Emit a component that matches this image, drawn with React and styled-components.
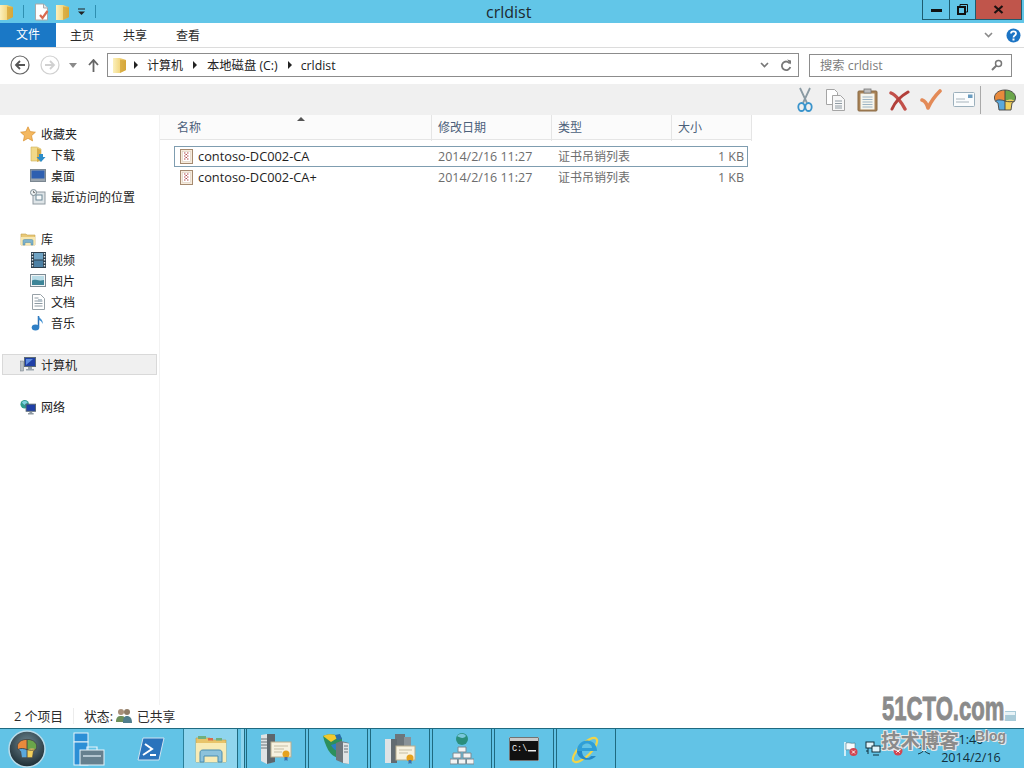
import React from "react";
import styled, { createGlobalStyle } from "styled-components";

const GlobalStyle = createGlobalStyle`
  html, body {
    margin: 0;
    padding: 0;
    background: #fff;
  }
  body {
    font-family: "Open Sans", "Noto Sans CJK SC", sans-serif;
    font-size: 12px;
    color: #1e1e1e;
  }
`;

const Screen = styled.div`
  position: relative;
  width: 1024px;
  height: 768px;
  display: flex;
  flex-direction: column;
  overflow: hidden;
  background: #fff;
`;

/* title bar */
const TitleBar = styled.div`
  height: 23px;
  flex: none;
  background: #62c6e8;
  display: grid;
  grid-template-columns: 486px auto 1fr;
`;

const QuickAccess = styled.div`
  display: flex;
  align-items: center;
  height: 23px;
`;

const Gap = styled.span`
  width: ${(p) => p.$w}px;
  flex: none;
`;

const QuickSep = styled.span`
  width: 1px;
  height: 13px;
  background: #2f8fb0;
  margin: 0 ${(p) => p.$right || 0}px 0 ${(p) => p.$left || 0}px;
`;

const Title = styled.div`
  font-size: 16px;
  line-height: 24px;
  color: #1d2a30;
`;

const WindowButtons = styled.div`
  display: flex;
  justify-content: flex-end;
  padding-right: 2px;
  height: 20px;
`;

const WindowButton = styled.div`
  width: ${(p) => p.$w}px;
  height: 20px;
  box-sizing: border-box;
  border: 1px solid #1d5c70;
  border-top: none;
  border-left-width: ${(p) => (p.$first ? 1 : 0)}px;
  background: ${(p) => p.$bg || "transparent"};
  display: flex;
  align-items: center;
  justify-content: center;
`;

/* ribbon tabs */
const TabRow = styled.div`
  height: 24px;
  flex: none;
  display: flex;
  align-items: center;
  border-bottom: 1px solid #dcdcdc;
`;

const FileTab = styled.div`
  width: 56px;
  height: 24px;
  background: #1a78c6;
  color: #fff;
  text-align: center;
  line-height: 23px;
  margin-right: 14px;
`;

const Tab = styled.div`
  width: 24px;
  margin-right: 29px;
  white-space: nowrap;
  color: #2a2a2a;
`;

const TabTools = styled.div`
  margin-left: auto;
  display: flex;
  align-items: center;
  gap: 13px;
  padding-right: 3px;
`;

/* address row */
const AddressRow = styled.div`
  height: 36px;
  flex: none;
  display: flex;
  align-items: center;
  padding: 0 12px 2px 10px;
  box-sizing: border-box;
`;

const NavGroup = styled.div`
  width: 97px;
  flex: none;
  display: flex;
  align-items: center;
`;

const AddressBox = styled.div`
  width: 692px;
  height: 24px;
  flex: none;
  box-sizing: border-box;
  border: 1px solid #8c8c8c;
  display: flex;
  align-items: center;
  padding: 0 5px;
`;

const Crumb = styled.span`
  white-space: nowrap;
  color: #222;
  font-size: ${(p) => p.$size || 12}px;
`;

const CrumbArrow = styled.span`
  width: 0;
  height: 0;
  border-left: 4px solid #222;
  border-top: 4px solid transparent;
  border-bottom: 4px solid transparent;
  margin: 0 ${(p) => p.$right || 9}px 0 ${(p) => p.$left || 9}px;
`;

const AddressTools = styled.div`
  margin-left: auto;
  display: flex;
  align-items: center;
  gap: 11px;
  padding-right: 1px;
`;

const SearchBox = styled.div`
  width: 203px;
  height: 23px;
  flex: none;
  margin-left: 10px;
  box-sizing: border-box;
  border: 1px solid #8c8c8c;
  display: flex;
  align-items: center;
  justify-content: space-between;
  padding: 0 8px 0 10px;
  color: #7d7d7d;
  font-size: 12.3px;
`;

/* command bar */
const CommandBar = styled.div`
  height: 31px;
  flex: none;
  background: #f0f0f0;
  display: flex;
  align-items: center;
  justify-content: flex-end;
  padding-right: 7px;
`;

const CommandIcon = styled.div`
  display: flex;
  margin-left: ${(p) => p.$left}px;
`;

const CommandSep = styled.span`
  width: 1px;
  height: 28px;
  background: #a9a9a9;
  margin: 0 12px 0 5px;
`;

/* main area */
const Main = styled.div`
  flex: 1;
  min-height: 0;
  display: flex;
`;

const Sidebar = styled.nav`
  width: 160px;
  flex: none;
  box-sizing: border-box;
  padding-top: 8px;
  border-right: 1px solid #f2f2f2;
`;

const NavGroupBlock = styled.div`
  margin-bottom: 21px;
`;

const NavRow = styled.div`
  height: 21px;
  box-sizing: border-box;
  margin: 0 2px 0 2px;
  display: flex;
  align-items: center;
  gap: 5px;
  padding-left: ${(p) => (p.$child ? 28 : 18)}px;
  color: #222;
  ${(p) => p.$selected && "background: #f0f0f0; border: 1px solid #d9d9d9; padding-left: 17px;"}
`;

const Content = styled.section`
  flex: 1;
  min-width: 0;
`;

const HeaderRow = styled.div`
  position: relative;
  width: 592px;
  height: 25px;
  box-sizing: border-box;
  border-bottom: 1px solid #e5e5e5;
  display: grid;
  grid-template-columns: 272px 120px 120px 80px;
  background: #fbfbfb;
`;

const HeaderCell = styled.div`
  padding-left: ${(p) => (p.$first ? 17 : 6)}px;
  line-height: 26px;
  color: #4c607a;
  border-right: 1px solid #e5e5e5;
`;

const SortArrow = styled.span`
  position: absolute;
  top: 2px;
  left: 137px;
  width: 0;
  height: 0;
  border-left: 4px solid transparent;
  border-right: 4px solid transparent;
  border-bottom: 4px solid #555;
`;

const FileList = styled.div`
  padding: 6px 0 0 14px;
`;

const FileRow = styled.div`
  width: 574px;
  height: ${(p) => (p.$selected ? 21 : 20)}px;
  box-sizing: border-box;
  display: grid;
  grid-template-columns: 263px 120px 120px 66px;
  align-items: center;
  border: 1px solid ${(p) => (p.$selected ? "#7f9db0" : "transparent")};
  padding-bottom: ${(p) => (p.$selected ? 1 : 0)}px;
`;

const NameCell = styled.div`
  display: flex;
  align-items: center;
  gap: 5px;
  padding-left: 5px;
  color: #1e1e1e;
  font-size: 12.8px;
`;

const MetaCell = styled.div`
  color: #6d6d6d;
  text-align: ${(p) => (p.$right ? "right" : "left")};
  font-size: ${(p) => p.$size || 12}px;
  white-space: nowrap;
`;

/* status bar */
const StatusBar = styled.div`
  height: 23px;
  flex: none;
  box-sizing: border-box;
  padding: 0 0 2px 14px;
  display: flex;
  align-items: center;
  color: #2c2c2c;
  font-size: 12.8px;
`;

const StatusSep = styled.span`
  width: 1px;
  height: 16px;
  background: #ececec;
  margin: 0 10px;
`;

const StatusShare = styled.span`
  display: flex;
  margin: 0 5px 0 3px;
`;

/* task bar */
const TaskBar = styled.div`
  height: 40px;
  flex: none;
  box-sizing: border-box;
  border-top: 1px solid #1f6a80;
  background: #62c3e6;
  display: flex;
  align-items: stretch;
`;

const StartSlot = styled.div`
  width: 183px;
  flex: none;
  display: flex;
  align-items: center;
  padding-left: 8px;
  box-sizing: border-box;
`;

const PinIcon = styled.div`
  display: flex;
  margin-left: ${(p) => p.$left}px;
`;

const ActiveApp = styled.div`
  width: 55px;
  flex: none;
  background: #8fd5ee;
  border-left: 1px solid #2a7f99;
  border-right: 1px solid #1f6a80;
  box-sizing: border-box;
  display: flex;
  align-items: center;
  justify-content: center;
  margin-right: 3px;
`;

const ActiveEdge = styled.div`
  width: 4px;
  flex: none;
  background: #8fd5ee;
  border-right: 1px solid #1f6a80;
  box-sizing: border-box;
`;

const AppButton = styled.div`
  width: 60px;
  flex: none;
  margin-left: ${(p) => (p.$tight ? 1 : 2)}px;
  box-sizing: border-box;
  border-left: 1px solid #1f6a80;
  border-right: 1px solid #1f6a80;
  display: flex;
  align-items: center;
  justify-content: center;
`;

const Tray = styled.div`
  flex: 1;
  display: flex;
  align-items: center;
  justify-content: flex-end;
`;

const TrayIcon = styled.div`
  display: flex;
  margin-right: ${(p) => p.$right}px;
`;

const Clock = styled.div`
  width: 70px;
  margin-right: 18px;
  text-align: center;
  line-height: 18px;
  font-size: 12.6px;
  color: #12303c;
  white-space: nowrap;
`;

/* watermark lying over the screen */
const Watermark = styled.div`
  position: absolute;
  left: 881px;
  top: 693px;
  width: 143px;
  height: 62px;
  pointer-events: none;
`;

const WaterMain = styled.div`
  position: absolute;
  left: 1px;
  top: 0;
  font-family: "Liberation Sans", sans-serif;
  font-weight: 700;
  font-size: 33px;
  line-height: 32px;
  color: #8b8b8b;
  -webkit-text-stroke: 0.9px #8b8b8b;
  text-shadow: 2px 1px 0 #fff, -2px -1px 0 #fff, 2px -1px 0 #fff, -2px 1px 0 #fff;
  transform: scaleX(0.67);
  transform-origin: left top;
  white-space: nowrap;
`;

const WaterSub = styled.div`
  position: absolute;
  left: 0;
  top: 35px;
  font-family: "Noto Sans CJK SC", sans-serif;
  font-weight: 700;
  font-size: 19.5px;
  line-height: 24px;
  color: #8b8b8b;
  text-shadow: 1px 1px 0 #e8e8e8, -1px -1px 0 #e8e8e8, 1px -1px 0 #e8e8e8, -1px 1px 0 #e8e8e8;
  white-space: nowrap;
`;

const WaterBlog = styled.div`
  position: absolute;
  left: 94px;
  top: 35px;
  font-family: "Liberation Sans", sans-serif;
  font-weight: 700;
  font-size: 14px;
  color: #8b8b8b;
  text-shadow: 1px 1px 0 #e8e8e8, -1px -1px 0 #e8e8e8;
`;

const WaterGhost = styled.svg`
  position: absolute;
  left: 123px;
  top: 18px;
`;

/* icons */
const Folder = ({ id }) => (
  <svg width="13" height="16" viewBox="0 0 13 16">
    <defs>
      <linearGradient id={id} x1="0" x2="1" y1="0" y2="0">
        <stop offset="0%" stopColor="#fbf0bd" />
        <stop offset="55%" stopColor="#f3d77f" />
        <stop offset="100%" stopColor="#d9ab3e" />
      </linearGradient>
    </defs>
    <path d="M0 1h7l6 2v10l-6 3H0z" fill={`url(#${id})`} />
    <path d="M7 2.500l6 1.500v9l-6 3z" fill="#d4a437" opacity=".75" />
  </svg>
);

const DocCheck = () => (
  <svg width="16" height="18" viewBox="0 0 16 18">
    <path d="M1.500 1h8l4 4v12h-12z" fill="#fff" stroke="#a9a9a9" />
    <path d="M9.500 1v4h4" fill="#e8e8e8" stroke="#a9a9a9" />
    <path d="M6 12l2.500 3 5-7" fill="none" stroke="#d9694e" strokeWidth="2.200" />
  </svg>
);

const SmallDown = () => (
  <svg width="9" height="8" viewBox="0 0 9 8">
    <path d="M1 1h7" stroke="#222" />
    <path d="M1 3.500h7L4.500 7z" fill="#222" />
  </svg>
);

const MinIcon = () => (
  <svg width="11" height="4">
    <rect width="11" height="3" y="1" fill="#111" />
  </svg>
);

const RestoreIcon = () => (
  <svg width="11" height="11" viewBox="0 0 11 11" fill="none" stroke="#111">
    <path d="M3 2.500V.5h7.500V8H8.500" />
    <rect x="1" y="3" width="7" height="7" strokeWidth="2" />
  </svg>
);

const CloseIcon = () => (
  <svg width="11" height="9" viewBox="0 0 11 9">
    <path d="M1.500 1l8 7M9.500 1l-8 7" stroke="#1c1010" strokeWidth="2.200" />
  </svg>
);

const Chevron = ({ color = "#777" }) => (
  <svg width="9" height="6" viewBox="0 0 9 6">
    <path d="M1 1l3.500 3.500L8 1" fill="none" stroke={color} strokeWidth="1.600" />
  </svg>
);

const HelpIcon = () => (
  <svg width="15" height="15" viewBox="0 0 15 15">
    <circle cx="7.500" cy="7.500" r="7" fill="#1c74c4" />
    <path d="M5 5.600c0-3 5-3 5 0 0 2-2.500 1.800-2.500 3.800" fill="none" stroke="#fff" strokeWidth="1.800" />
    <rect x="6.500" y="10.500" width="2" height="2" fill="#fff" />
  </svg>
);

const NavCircle = ({ faded }) => (
  <svg width="20" height="20" viewBox="0 0 20 20" style={{ opacity: faded ? 0.3 : 1 }}>
    <circle cx="10" cy="10" r="9" fill="#fff" stroke="#666" strokeWidth="1.200" />
    {faded ? (
      <path d="M5 10h9M10 6l4 4-4 4" fill="none" stroke="#666" strokeWidth="1.800" />
    ) : (
      <path d="M15 10H6M10 6l-4 4 4 4" fill="none" stroke="#555" strokeWidth="1.800" />
    )}
  </svg>
);

const TinyTriangle = () => (
  <svg width="8" height="5" viewBox="0 0 8 5">
    <path d="M0 0h8L4 5z" fill="#8a8a8a" />
  </svg>
);

const UpArrow = () => (
  <svg width="11" height="13" viewBox="0 0 11 13">
    <path d="M5.500 13V2M1 6l4.500-5L10 6" fill="none" stroke="#666" strokeWidth="1.800" />
  </svg>
);

const RefreshIcon = () => (
  <svg width="12" height="13" viewBox="0 0 12 13">
    <path d="M9.800 4.500A4.300 4.300 0 1 0 10.300 8" fill="none" stroke="#777" strokeWidth="1.800" />
    <path d="M7 0.500l4 1v4z" fill="#777" />
  </svg>
);

const SearchIcon = () => (
  <svg width="12" height="12" viewBox="0 0 12 12">
    <circle cx="7.500" cy="4.500" r="3" fill="none" stroke="#777" strokeWidth="1.500" />
    <path d="M5.500 6.500L1 11" stroke="#777" strokeWidth="2" />
  </svg>
);

const Scissors = () => (
  <svg width="16" height="25" viewBox="0 0 16 25" fill="none">
    <path d="M3 1l7 15M13 1L6 16" stroke="#8a9aa3" strokeWidth="1.800" />
    <ellipse cx="4.500" cy="20" rx="3.200" ry="4" stroke="#3a94cc" strokeWidth="1.800" />
    <ellipse cx="11.500" cy="20" rx="3.200" ry="4" stroke="#3a94cc" strokeWidth="1.800" />
  </svg>
);

const CopyIcon = () => (
  <svg width="19" height="22" viewBox="0 0 19 22">
    <path d="M.5.500h8l3 3v12H.5z" fill="#fff" stroke="#a5a5a5" />
    <path d="M6.500 6.500h8l4 4v11h-12z" fill="#f7f7f7" stroke="#a5a5a5" />
    <path d="M9 12h7M9 14.500h7M9 17h7M9 19h7" stroke="#8f9ba3" />
  </svg>
);

const ClipboardIcon = () => (
  <svg width="21" height="24" viewBox="0 0 21 24">
    <rect x="1" y="3" width="19" height="20" rx="1" fill="#a88256" stroke="#8a6b45" />
    <rect x="3.500" y="5.500" width="14" height="16" fill="#f5f5ee" />
    <path d="M5.500 9h10M5.500 11.500h10M5.500 14h10M5.500 16.500h10M5.500 19h10" stroke="#9db4c4" />
    <rect x="7" y="1" width="7" height="4" fill="#bdbdbd" stroke="#777" strokeWidth=".8" />
  </svg>
);

const DeleteIcon = () => (
  <svg width="22" height="22" viewBox="0 0 22 22">
    <path d="M3 4C8 6 14 14 17 20" stroke="#c2504a" strokeWidth="3.400" fill="none" strokeLinecap="round" />
    <path d="M20 3C13 7 7 13 4 20" stroke="#b23f3a" strokeWidth="3" fill="none" strokeLinecap="round" />
  </svg>
);

const CheckIcon = () => (
  <svg width="22" height="21" viewBox="0 0 22 21">
    <path d="M2 11c3 1 5 4 6 8 3-7 7-12 12-17" stroke="#e38a57" strokeWidth="3.600" fill="none" strokeLinecap="round" strokeLinejoin="round" />
  </svg>
);

const MailIcon = () => (
  <svg width="22" height="15" viewBox="0 0 22 15">
    <rect x=".5" y=".5" width="21" height="14" rx="1" fill="#fafcfd" stroke="#9cb0bc" />
    <rect x="15" y="2.500" width="4.500" height="3.500" fill="#6a9cc0" />
    <path d="M3 7h9M3 10h13" stroke="#a8b4bc" />
  </svg>
);

const HeadShape = () => (
  <>
    <path d="M12 1C6 1 2 4 1.500 8c-.1 1.500.2 2.700 1 4 2.500-2 6.500-1 9.500 0z" fill="#e88a3c" />
    <path d="M12 1c6 0 10 3 10.500 7 .1 1.500-.2 2.700-1 4-2.500-2-6.500-1-9.500 0z" fill="#6aa54a" />
    <path d="M2.500 12c.5 1 1.500 1.500 2.500 2l1 7h6v-9c-3-1-7-2-9.500 0z" fill="#5aa8dc" />
    <path d="M21.500 12c-.5 1-1.500 1.500-2.500 2l-1 7h-6v-9c3-1 7-2 9.500 0z" fill="#f0cf5c" />
    <path d="M12 1v20M2.500 12c2.500-2 6.500-1 9.500 0s7 1 9.500 0" fill="none" stroke="#3d3d3d" strokeWidth=".9" />
    <path d="M12 1C6 1 2 4 1.500 8c-.2 3 1 5 3.500 6l1 7h12l1-7c2.500-1 3.700-3 3.500-6C22 4 18 1 12 1z" fill="none" stroke="#444" strokeWidth=".9" />
  </>
);

const ColorHead = () => (
  <svg width="24" height="22" viewBox="0 0 24 22">
    <HeadShape />
  </svg>
);

const StarIcon = () => (
  <svg width="16" height="16" viewBox="0 0 16 16">
    <path d="M8 .8l2.200 4.800 5.200.6-3.900 3.500 1.100 5.200L8 12.300l-4.600 2.600 1.100-5.200L.6 6.200l5.200-.6z" fill="#f4b860" stroke="#d98f2e" strokeWidth=".7" />
  </svg>
);

const DownloadIcon = () => (
  <svg width="16" height="17" viewBox="0 0 16 17">
    <path d="M1 1h6l4 2v12H1z" fill="#f1d989" stroke="#cfae55" strokeWidth=".6" />
    <path d="M7 2l4 2v10l-4 2z" fill="#d7ad4b" />
    <path d="M9 8h4v3h2.500L11 16l-4.500-5H9z" fill="#2d8dc9" />
  </svg>
);

const DesktopIcon = () => (
  <svg width="16" height="13" viewBox="0 0 16 13">
    <rect x=".5" y=".5" width="15" height="12" fill="#9aa4ad" stroke="#7b8791" />
    <rect x="1.500" y="1.500" width="13" height="8" fill="#2e5fb0" />
  </svg>
);

const RecentIcon = () => (
  <svg width="16" height="16" viewBox="0 0 16 16">
    <rect x="3" y="3" width="12" height="12" fill="#dfe5e8" stroke="#8f9aa1" />
    <rect x="6" y="6" width="6" height="5" fill="#f8fafa" stroke="#6e8a98" />
    <circle cx="3.500" cy="3.500" r="3" fill="#eef2f3" stroke="#7b8a92" />
    <path d="M3.500 1.800v1.800h1.600" stroke="#555" fill="none" strokeWidth=".8" />
  </svg>
);

const LibraryIcon = () => (
  <svg width="16" height="16" viewBox="0 0 16 16">
    <path d="M1 3h5l1 1h8v10H1z" fill="#e8c877" stroke="#c2a24e" strokeWidth=".6" />
    <path d="M1 6h14v8H1z" fill="#f7e7b0" />
    <path d="M3 14v-4c0-1 .5-1.500 1.500-1.500h7c1 0 1.500.5 1.500 1.500v4h-2v-2.500H5V14z" fill="#7fb2cc" stroke="#4e89a8" strokeWidth=".5" />
  </svg>
);

const VideoIcon = () => (
  <svg width="15" height="16" viewBox="0 0 15 16">
    <rect width="15" height="16" fill="#2d3f4d" />
    <rect x="3" y="1" width="9" height="6.500" fill="#6fa3c4" />
    <rect x="3" y="8.500" width="9" height="6.500" fill="#4c80a4" />
    <path d="M.8 1h1.400v1.500H.8zM.8 4h1.400v1.500H.8zM.8 7h1.400v1.500H.8zM.8 10h1.400v1.500H.8zM.8 13h1.400v1.500H.8zM12.800 1h1.400v1.500h-1.400zM12.800 4h1.400v1.500h-1.400zM12.800 7h1.400v1.500h-1.400zM12.800 10h1.400v1.500h-1.400zM12.800 13h1.400v1.500h-1.400z" fill="#dfe7ec" />
  </svg>
);

const PictureIcon = () => (
  <svg width="16" height="13" viewBox="0 0 16 13">
    <rect x=".5" y=".5" width="15" height="12" fill="#f1f4f5" stroke="#7c8a93" />
    <rect x="2" y="2" width="12" height="4.500" fill="#b8dbe6" />
    <path d="M2 6.500c3-2 6 1 12-.5V11H2z" fill="#3d8598" />
  </svg>
);

const DocIcon = () => (
  <svg width="13" height="16" viewBox="0 0 13 16">
    <path d="M.5.500h8l4 4v11H.5z" fill="#fff" stroke="#98a2a8" />
    <path d="M2.500 4h4M2.500 7h8M2.500 9.500h8M2.500 12h8" stroke="#8e9ba3" />
    <rect x="6" y="5" width="4" height="3" fill="#b6c3cb" />
  </svg>
);

const MusicIcon = () => (
  <svg width="14" height="16" viewBox="0 0 14 16">
    <path d="M7.500 1v11" stroke="#2a6fb4" strokeWidth="1.500" />
    <path d="M7.500 1c1 2.500 5 3.500 4 8-.5-2.500-2-3.500-4-4z" fill="#3d8ed0" />
    <ellipse cx="4.500" cy="12.500" rx="3.800" ry="3" fill="#2f7fc6" />
  </svg>
);

const ComputerIcon = () => (
  <svg width="16" height="15" viewBox="0 0 16 15">
    <rect x="0" y="4" width="3.500" height="10" fill="#b8bfc4" stroke="#6f7a82" strokeWidth=".5" />
    <rect x="4.500" y="0.500" width="11" height="9" fill="#1f3fa6" stroke="#5b6b76" />
    <path d="M6 2h7L6 8z" fill="#5d8de0" />
    <path d="M8 10h4v2h2v1.500H6V12h2z" fill="#9aa5ad" />
  </svg>
);

const NetworkIcon = () => (
  <svg width="17" height="16" viewBox="0 0 17 16">
    <circle cx="5" cy="5" r="4.500" fill="#2f9c8e" />
    <path d="M2 3c2-2 4-2 6 0-1 2-2 1-3 3-1-1-2-1-3-3z" fill="#7fcfe0" />
    <rect x="6.500" y="5" width="10" height="7.500" fill="#1f3fa6" stroke="#55646e" />
    <path d="M10 13h3v1.500h1.500V16h-6v-1.500H10z" fill="#8f9aa2" />
  </svg>
);

const CrlIcon = () => (
  <svg width="13" height="15" viewBox="0 0 13 15">
    <rect x=".5" y=".5" width="12" height="14" fill="#f7ebdc" stroke="#a58a70" />
    <rect x="2.500" y="2.500" width="8" height="10" fill="#fff" stroke="#d4c5b4" strokeWidth=".5" />
    <path d="M4 4h1.500M7 4h1.500M5.500 5.500H7M4 7h1.500M7 7h1.500M5.500 8.500H7M4 10h1.500M7 10h1.500" stroke="#b14a4a" />
  </svg>
);

const UsersIcon = () => (
  <svg width="16" height="15" viewBox="0 0 16 15">
    <circle cx="5" cy="4" r="3" fill="#a8907a" />
    <circle cx="11" cy="4" r="3" fill="#8f7d68" />
    <path d="M0 14c0-5 2-6 5-6s5 1 5 6z" fill="#6d8f5a" />
    <path d="M7 15c0-5 1-7 4-7s5 2 5 7z" fill="#4f7d8c" />
  </svg>
);

const StartOrb = () => (
  <svg width="38" height="38" viewBox="0 0 38 38">
    <defs>
      <radialGradient id="orb" cx="50%" cy="35%" r="65%">
        <stop offset="0%" stopColor="#6d8792" />
        <stop offset="100%" stopColor="#1d2c33" />
      </radialGradient>
    </defs>
    <circle cx="19" cy="19" r="18" fill="url(#orb)" stroke="#b9dcea" strokeWidth="1.500" />
    <g transform="translate(8 8.500) scale(.92)">
      <HeadShape />
    </g>
  </svg>
);

const ServerManagerIcon = () => (
  <svg width="32" height="34" viewBox="0 0 32 34">
    <rect x="1" y="1" width="14" height="9" fill="#2b8fd6" stroke="#e6f4fa" />
    <rect x="1" y="10" width="14" height="23" fill="#2b8fd6" stroke="#e6f4fa" />
    <rect x="7" y="18" width="24" height="15" fill="#66808e" stroke="#e6f4fa" />
    <path d="M14 18v-3h10v3" fill="none" stroke="#e6f4fa" strokeWidth="1.200" />
    <path d="M10 24h18" stroke="#e6f4fa" strokeWidth="1.200" />
  </svg>
);

const PowerShellIcon = () => (
  <svg width="28" height="24" viewBox="0 0 28 24">
    <path d="M6 1h21L22 23H1z" fill="#2a73bc" stroke="#cfe3f1" />
    <path d="M8 7l7 5-9 6" fill="none" stroke="#fff" strokeWidth="2" />
    <path d="M13 18h6" stroke="#fff" strokeWidth="2" />
  </svg>
);

const ExplorerIcon = () => (
  <svg width="32" height="28" viewBox="0 0 32 28">
    <path d="M1 3h14l2 2h14v22H1z" fill="#e8c46a" stroke="#bf9d46" strokeWidth=".6" />
    <rect x="3" y="1" width="8" height="3" fill="#6fb07f" />
    <rect x="13" y="3" width="5" height="2.500" fill="#d96b4a" />
    <rect x="21" y="3" width="6" height="2.500" fill="#6fb07f" />
    <path d="M1 8h30v19H1z" fill="#f8ebb5" />
    <path d="M5 27v-9c0-2 1-3 3-3h16c2 0 3 1 3 3v9h-4v-6H9v6z" fill="#8cc2dc" stroke="#4a8db0" />
  </svg>
);

const CertServerIcon = () => (
  <svg width="32" height="32" viewBox="0 0 32 32">
    <path d="M1 2l6-1h8v8l-2 20-6 2-6-3z" fill="#dfe3e5" />
    <path d="M7 1h8v28l-8 2z" fill="#5d666c" />
    <path d="M1 6h6M1 9h6M1 12h6M1 15h6" stroke="#6b747a" />
    <rect x="11" y="9" width="20" height="15" fill="#f7f2e0" stroke="#b9ae8e" />
    <path d="M14 13h14M14 16h10M14 19h8" stroke="#c5bda5" />
    <circle cx="26" cy="21" r="3.500" fill="#e5a21f" />
    <path d="M24.500 24v4l1.500-1 1.500 1v-4" fill="#3f6fa8" />
  </svg>
);

const DnsServerIcon = () => (
  <svg width="32" height="32" viewBox="0 0 32 32">
    <path d="M1 3C7 0 15 1 20 5v20C12 26 5 20 1 3z" fill="#2d8f5c" />
    <path d="M1 3C7 0 13 1 17 4L9 9z" fill="#f2c92e" />
    <path d="M9 12l10-3v10c-4 0-8-3-10-7z" fill="#2a7fc4" />
    <path d="M14 10l5-2 8 2v21l-6-1-7-3z" fill="#6d767c" />
    <path d="M21 9.500l6 1V31l-6-1z" fill="#dfe3e5" />
    <path d="M22 13h4M22 16h4M22 19h4" stroke="#6b747a" />
    <path d="M13 2l5-1 2 5-5 1z" fill="#2b6fa8" />
  </svg>
);

const CertStackIcon = () => (
  <svg width="32" height="32" viewBox="0 0 32 32">
    <rect x="11" y="1" width="10" height="22" fill="#6c757b" />
    <rect x="1" y="6" width="6" height="24" fill="#dfe3e5" />
    <rect x="7" y="6" width="6" height="24" fill="#626b71" />
    <rect x="20" y="4" width="7" height="14" fill="#899298" />
    <rect x="12" y="13" width="19" height="14" fill="#f7f2e0" stroke="#b9ae8e" />
    <path d="M15 17h13M15 20h9" stroke="#c5bda5" />
    <circle cx="26" cy="25" r="3.500" fill="#e5a21f" />
    <path d="M24.500 27v4l1.500-1 1.500 1v-4" fill="#3f6fa8" />
  </svg>
);

const DirectoryIcon = () => (
  <svg width="24" height="33" viewBox="0 0 24 33">
    <circle cx="12" cy="7" r="6" fill="#2a8f7c" />
    <path d="M7 4c3-3 7-3 9 0-2 3-6 2-9 0z" fill="#79c7dc" />
    <path d="M8 15h8v5H8zM3 21h8v5H3zM13 21h8v5h-8zM0 27h7.500v5H0zM8.300 27h7.500v5H8.300zM16.500 27H24v5h-7.500z" fill="#f3f3f3" stroke="#7a8a92" />
  </svg>
);

const CmdIcon = () => (
  <svg width="30" height="24" viewBox="0 0 30 24">
    <rect width="30" height="24" fill="#111" stroke="#cfd5d8" />
    <rect x="1" y="1" width="28" height="3" fill="#c9c9c9" />
    <text x="3" y="14" fill="#eee" fontFamily="Liberation Mono, monospace" fontSize="8.500">C:\</text>
    <rect x="19" y="13" width="8" height="1.500" fill="#eee" />
  </svg>
);

const IEIcon = () => (
  <svg width="32" height="32" viewBox="0 0 32 32">
    <ellipse cx="15" cy="17" rx="16" ry="6" transform="rotate(-45 15 17)" fill="none" stroke="#f0d44a" strokeWidth="2.200" />
    <path d="M7 18h20C27 9 19 6 14 8 9 10 7 14 7 18zM12 15c0-6 10-6 10 0z" fill="#2f9fd8" fillRule="evenodd" />
    <path d="M7 18c0 9 13 12 19 5h-5c-3 4-9 2-9-5z" fill="#2389c9" />
  </svg>
);

const FlagError = () => (
  <svg width="16" height="16" viewBox="0 0 16 16">
    <path d="M2 1v14" stroke="#f6fbfd" strokeWidth="1.500" />
    <path d="M3 2c3-1 5 1 9 0v7c-4 1-6-1-9 0z" fill="#f6fbfd" stroke="#38606f" strokeWidth=".5" />
    <circle cx="10.500" cy="11" r="4" fill="#d24652" />
    <path d="M9 9.500l3 3M12 9.500l-3 3" stroke="#fff" />
  </svg>
);

const NetError = () => (
  <svg width="16" height="16" viewBox="0 0 16 16" fill="none" stroke="#11303c">
    <rect x="1" y="1" width="8" height="6" fill="#dff4fb" />
    <rect x="7" y="5" width="8" height="6" fill="#dff4fb" />
    <path d="M3 7v3H1M3 10v3" />
    <path d="M8 14h6" />
  </svg>
);

const SoundError = () => (
  <svg width="20" height="16" viewBox="0 0 20 16">
    <path d="M1 6h3l3-3v8L4 9H1z" fill="#dff4fb" />
    <circle cx="11" cy="10" r="4.500" fill="#d24652" />
    <path d="M9.300 8.300l3.400 3.400M12.700 8.300l-3.400 3.400" stroke="#fff" />
  </svg>
);

const ImeIcon = () => (
  <svg width="14" height="12" viewBox="0 0 14 12" fill="none" stroke="#163540">
    <path d="M1 5h12M3 1l3 4M11 1L8 5M7 5v2M1 11c3-1 5-2 6-4 1 2 3 3 6 4" />
  </svg>
);

const favourites = [
  { label: "下载", Icon: DownloadIcon },
  { label: "桌面", Icon: DesktopIcon },
  { label: "最近访问的位置", Icon: RecentIcon },
];

const libraries = [
  { label: "视频", Icon: VideoIcon },
  { label: "图片", Icon: PictureIcon },
  { label: "文档", Icon: DocIcon },
  { label: "音乐", Icon: MusicIcon },
];

const files = [
  { name: "contoso-DC002-CA", selected: true },
  { name: "contoso-DC002-CA+" },
];

const apps = [CertServerIcon, DnsServerIcon, CertStackIcon, DirectoryIcon, CmdIcon, IEIcon];

const IconBox = styled.span`
  width: 16px;
  height: 16px;
  flex: none;
  display: flex;
  align-items: center;
  justify-content: center;
`;

const NavItem = ({ Icon, label, child, selected }) => (
  <NavRow $child={child} $selected={selected}>
    <IconBox>
      <Icon />
    </IconBox>
    {label}
  </NavRow>
);

export default function App() {
  return (
    <Screen>
      <GlobalStyle />
      <TitleBar>
        <QuickAccess>
          <Folder id="qa1" />
          <QuickSep $left={10} $right={10} />
          <DocCheck />
          <Gap $w={6} />
          <Folder id="qa2" />
          <Gap $w={8} />
          <SmallDown />
          <QuickSep $left={9} />
        </QuickAccess>
        <Title>crldist</Title>
        <WindowButtons>
          <WindowButton $w={28} $first>
            <MinIcon />
          </WindowButton>
          <WindowButton $w={26}>
            <RestoreIcon />
          </WindowButton>
          <WindowButton $w={46} $bg="#c0554b">
            <CloseIcon />
          </WindowButton>
        </WindowButtons>
      </TitleBar>

      <TabRow>
        <FileTab>文件</FileTab>
        <Tab>主页</Tab>
        <Tab>共享</Tab>
        <Tab>查看</Tab>
        <TabTools>
          <Chevron color="#8a8a8a" />
          <HelpIcon />
        </TabTools>
      </TabRow>

      <AddressRow>
        <NavGroup>
          <NavCircle />
          <Gap $w={10} />
          <NavCircle faded />
          <Gap $w={9} />
          <TinyTriangle />
          <Gap $w={11} />
          <UpArrow />
        </NavGroup>
        <AddressBox>
          <Folder id="addr" />
          <CrumbArrow $left={8} />
          <Crumb>计算机</Crumb>
          <CrumbArrow $left={10} $right={10} />
          <Crumb $size={12.3}>本地磁盘 (C:)</Crumb>
          <CrumbArrow $left={10} $right={9} />
          <Crumb $size={12.3}>crldist</Crumb>
          <AddressTools>
            <Chevron />
            <RefreshIcon />
          </AddressTools>
        </AddressBox>
        <SearchBox>
          搜索 crldist
          <SearchIcon />
        </SearchBox>
      </AddressRow>

      <CommandBar>
        <CommandIcon $left={0}>
          <Scissors />
        </CommandIcon>
        <CommandIcon $left={13}>
          <CopyIcon />
        </CommandIcon>
        <CommandIcon $left={12}>
          <ClipboardIcon />
        </CommandIcon>
        <CommandIcon $left={10}>
          <DeleteIcon />
        </CommandIcon>
        <CommandIcon $left={10}>
          <CheckIcon />
        </CommandIcon>
        <CommandIcon $left={11}>
          <MailIcon />
        </CommandIcon>
        <CommandSep />
        <ColorHead />
      </CommandBar>

      <Main>
        <Sidebar>
          <NavGroupBlock>
            <NavItem Icon={StarIcon} label="收藏夹" />
            {favourites.map((f) => (
              <NavItem key={f.label} Icon={f.Icon} label={f.label} child />
            ))}
          </NavGroupBlock>
          <NavGroupBlock>
            <NavItem Icon={LibraryIcon} label="库" />
            {libraries.map((f) => (
              <NavItem key={f.label} Icon={f.Icon} label={f.label} child />
            ))}
          </NavGroupBlock>
          <NavGroupBlock>
            <NavItem Icon={ComputerIcon} label="计算机" selected />
          </NavGroupBlock>
          <NavGroupBlock>
            <NavItem Icon={NetworkIcon} label="网络" />
          </NavGroupBlock>
        </Sidebar>
        <Content>
          <HeaderRow>
            <SortArrow />
            <HeaderCell $first>名称</HeaderCell>
            <HeaderCell>修改日期</HeaderCell>
            <HeaderCell>类型</HeaderCell>
            <HeaderCell>大小</HeaderCell>
          </HeaderRow>
          <FileList>
            {files.map((f) => (
              <FileRow key={f.name} $selected={f.selected}>
                <NameCell>
                  <CrlIcon />
                  {f.name}
                </NameCell>
                <MetaCell $size={12.5}>2014/2/16 11:27</MetaCell>
                <MetaCell>证书吊销列表</MetaCell>
                <MetaCell $right $size={12.5}>1 KB</MetaCell>
              </FileRow>
            ))}
          </FileList>
        </Content>
      </Main>

      <StatusBar>
        2 个项目
        <StatusSep />
        状态:
        <StatusShare>
          <UsersIcon />
        </StatusShare>
        已共享
      </StatusBar>

      <TaskBar>
        <StartSlot>
          <StartOrb />
          <PinIcon $left={27}>
            <ServerManagerIcon />
          </PinIcon>
          <PinIcon $left={32}>
            <PowerShellIcon />
          </PinIcon>
        </StartSlot>
        <ActiveApp>
          <ExplorerIcon />
        </ActiveApp>
        <ActiveEdge />
        {apps.map((Icon, i) => (
          <AppButton key={i} $tight={i === 0}>
            <Icon />
          </AppButton>
        ))}
        <Tray>
          <TrayIcon $right={6}>
            <FlagError />
          </TrayIcon>
          <TrayIcon $right={6}>
            <NetError />
          </TrayIcon>
          <TrayIcon $right={10}>
            <SoundError />
          </TrayIcon>
          <TrayIcon $right={5}>
            <ImeIcon />
          </TrayIcon>
          <Clock>
            1:40
            <br />
            2014/2/16
          </Clock>
        </Tray>
      </TaskBar>

      <Watermark>
        <WaterGhost width="12" height="10" viewBox="0 0 12 10">
          <rect width="12" height="10" fill="#a9cbd8" />
          <rect x="1" y="1" width="10" height="3" fill="#e8f3f7" />
        </WaterGhost>
        <WaterMain>51CTO.com</WaterMain>
        <WaterSub>技术博客</WaterSub>
        <WaterBlog>Blog</WaterBlog>
      </Watermark>
    </Screen>
  );
}
